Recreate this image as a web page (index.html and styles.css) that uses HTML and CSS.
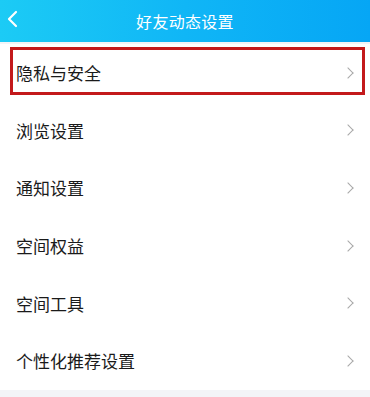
FILE: index.html
```html
<!DOCTYPE html>
<html lang="zh-CN">
<head>
    <meta charset="UTF-8">
    <meta name="viewport" content="width=device-width, initial-scale=1.0">
    <title>好友动态设置</title>
    <link rel="stylesheet" href="styles.css">
</head>
<body>
    <!-- 顶部标题栏 -->
    <header class="top-bar">
        <span class="back">
            <svg width="12" height="18" viewBox="0 0 12 18">
                <path d="M10 2 L3 9 L10 16" fill="none" stroke="#fff" stroke-width="2.2" stroke-linecap="round" stroke-linejoin="round"/>
            </svg>
        </span>
        <h1>好友动态设置</h1>
    </header>

    <!-- 设置列表 -->
    <ul class="setting-list">
        <li class="setting-item marked">隐私与安全<i class="arrow"></i></li>
        <li class="setting-item">浏览设置<i class="arrow"></i></li>
        <li class="setting-item">通知设置<i class="arrow"></i></li>
        <li class="setting-item">空间权益<i class="arrow"></i></li>
        <li class="setting-item">空间工具<i class="arrow"></i></li>
        <li class="setting-item">个性化推荐设置<i class="arrow"></i></li>
    </ul>
</body>
</html>
```

FILE: styles.css
```css
/* 全局样式 */
* {
    margin: 0;
    padding: 0;
    box-sizing: border-box;
}

body {
    width: 370px;
    height: 397px;
    overflow: hidden;
    background-color: #f3f4f7;
    font-family: "Noto Sans CJK SC", "Noto Sans", sans-serif;
    color: #1a1a1a;
}

/* 顶部标题栏 */
.top-bar {
    position: relative;
    height: 42px;
    display: flex;
    align-items: center;
    justify-content: center;
    background: linear-gradient(90deg, #1ccbf5 0%, #10b6f6 50%, #06a6f5 100%);
    color: #fff;
}

.top-bar h1 {
    font-size: 16px;
    font-weight: normal;
    letter-spacing: 0.3px;
}

.back {
    position: absolute;
    left: 6px;
    top: 10px;
    display: flex;
}

/* 设置列表 */
.setting-list {
    list-style: none;
    margin-top: 2px;
    background-color: #fff;
}

.setting-item {
    position: relative;
    height: 57.6px;
    display: flex;
    align-items: center;
    justify-content: space-between;
    padding: 0 18px 0 16px;
    font-size: 17px;
}

.arrow {
    width: 8px;
    height: 8px;
    border-top: 1.5px solid #a8a8a8;
    border-right: 1.5px solid #a8a8a8;
    transform: rotate(45deg);
}

/* 标注红框 */
.marked::after {
    content: "";
    position: absolute;
    top: 3px;
    left: 10px;
    right: 5px;
    bottom: 7px;
    border: 3px solid #c3191b;
}
```
